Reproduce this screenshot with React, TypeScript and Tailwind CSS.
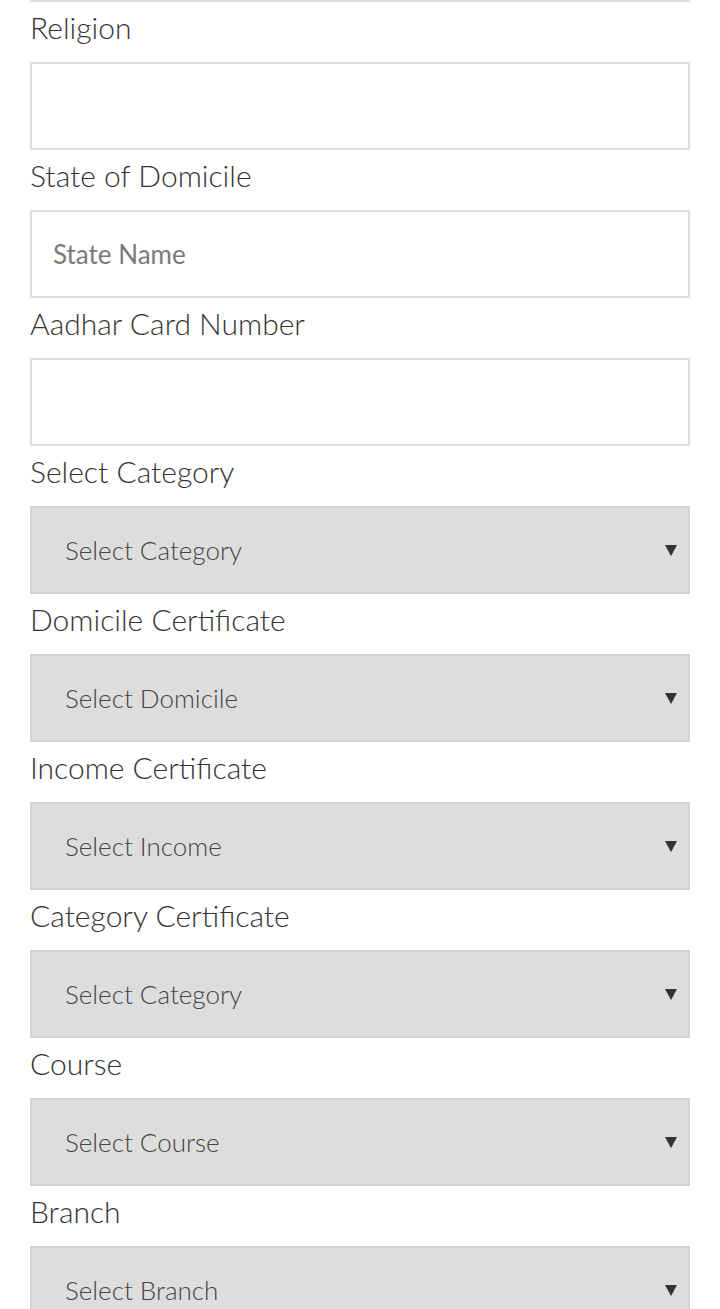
import React from 'react';

type Field = { label: string; kind: 'input' | 'select'; placeholder?: string };

const fields: Field[] = [
  { label: 'Religion', kind: 'input' },
  { label: 'State of Domicile', kind: 'input', placeholder: 'State Name' },
  { label: 'Aadhar Card Number', kind: 'input' },
  { label: 'Select Category', kind: 'select', placeholder: 'Select Category' },
  { label: 'Domicile Certificate', kind: 'select', placeholder: 'Select Domicile' },
  { label: 'Income Certificate', kind: 'select', placeholder: 'Select Income' },
  { label: 'Category Certificate', kind: 'select', placeholder: 'Select Category' },
  { label: 'Course', kind: 'select', placeholder: 'Select Course' },
  { label: 'Branch', kind: 'select', placeholder: 'Select Branch' },
];

const Arrow = () => (
  <svg width="12" height="11" viewBox="0 0 12 11" className="shrink-0">
    <path d="M0 0 H12 L6 11 Z" fill="#333" />
  </svg>
);

const FormField = ({ field }: { field: Field }) => (
  <div>
    <label className="block h-[60px] leading-[50px] text-[30px] font-light text-[#333]">{field.label}</label>
    {field.kind === 'input' ? (
      <input
        type="text"
        placeholder={field.placeholder}
        className="block w-full h-[88px] border-2 border-[#dddddd] bg-white px-[21px] text-[26px] font-normal text-[#333] placeholder:text-[#7a7a7a] outline-none"
      />
    ) : (
      <div className="flex items-center justify-between h-[88px] border-2 border-[#d4d4d4] bg-[#dddddd] pl-[33px] pr-[11px]">
        <span className="text-[26px] font-light text-[#444]">{field.placeholder}</span>
        <Arrow />
      </div>
    )}
  </div>
);

export default function App() {
  return (
    <div className="min-h-screen bg-white px-[30px]" style={{ fontFamily: 'Lato, "Open Sans", sans-serif' }}>
      <div className="h-[2px] bg-[#dddddd]" />
      {fields.map((f, i) => (
        <FormField key={i} field={f} />
      ))}
    </div>
  );
}
